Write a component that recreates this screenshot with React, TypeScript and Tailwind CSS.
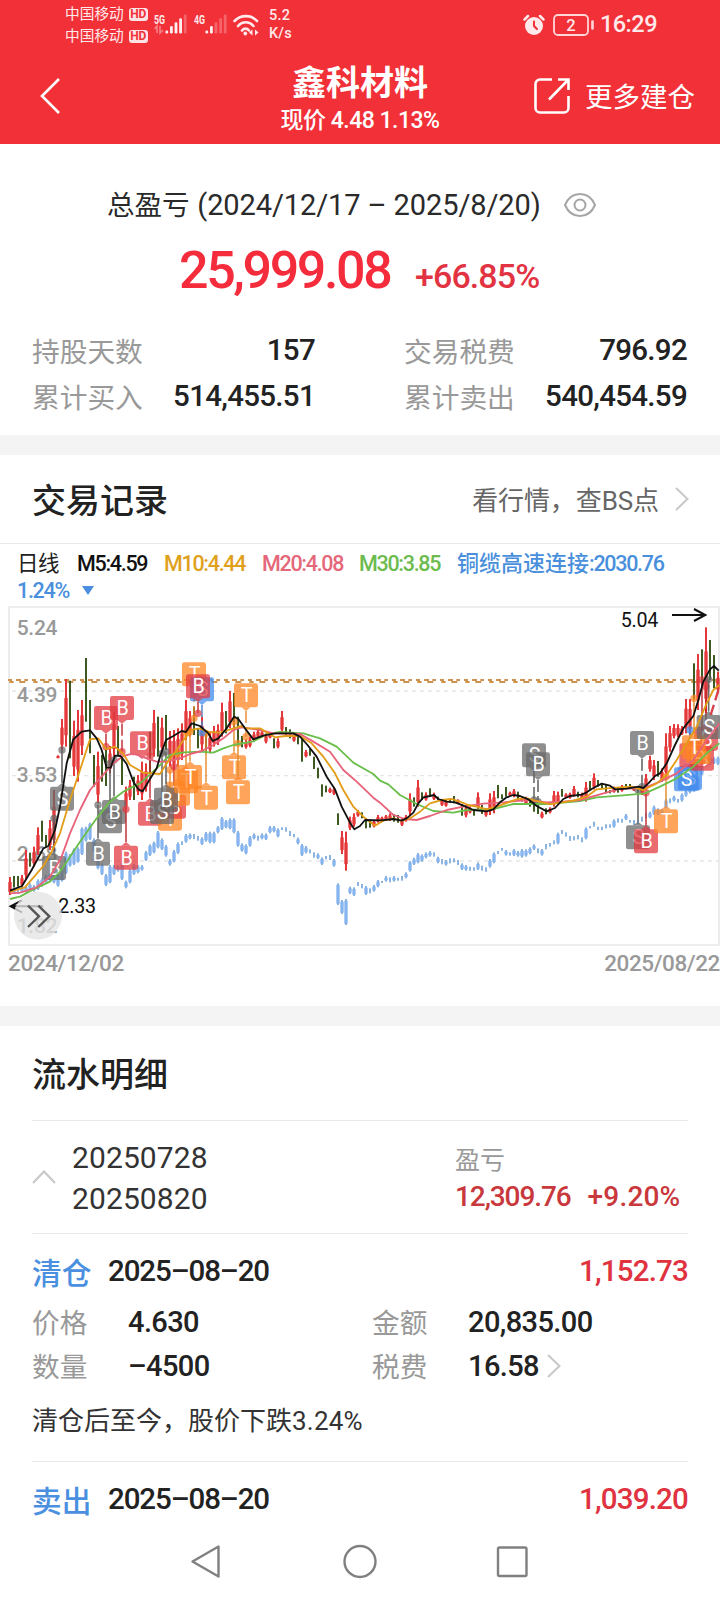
import React from "react";

// Chart units are a third of a pixel: 2160 x 1140 drawn at 720 x 380
const STEP = 12;
const FIRST_X = 30;

// [direction, high, low]
type Candle = ["r" | "g", number, number];

const candles: Candle[] = [
  ["r", 831, 885], ["g", 828, 862], ["g", 828, 860], ["r", 825, 860], ["r", 750, 840], ["g", 758, 800],
  ["r", 740, 800], ["r", 682, 765], ["g", 662, 725], ["g", 705, 740], ["r", 660, 750], ["r", 570, 750],
  ["r", 466, 475], ["r", 357, 450], ["r", 237, 440], ["g", 242, 475], ["r", 362, 528], ["r", 330, 545],
  ["r", 300, 465], ["g", 174, 365], ["g", 300, 460], ["g", 465, 560], ["r", 455, 610], ["g", 465, 545],
  ["g", 440, 558], ["r", 438, 520], ["r", 335, 470], ["g", 378, 465], ["g", 470, 555], ["r", 560, 630],
  ["r", 540, 600], ["g", 530, 600], ["r", 525, 585], ["r", 485, 600], ["r", 490, 575], ["g", 395, 520],
  ["r", 330, 470], ["g", 350, 470], ["r", 353, 460], ["g", 345, 450], ["r", 393, 500], ["r", 390, 510],
  ["r", 385, 500], ["r", 370, 480], ["r", 300, 420], ["r", 333, 410], ["g", 320, 405], ["g", 385, 445],
  ["r", 350, 450], ["g", 400, 460], ["r", 395, 460], ["r", 378, 440], ["r", 373, 435], ["r", 308, 410],
  ["g", 333, 400], ["r", 273, 385], ["g", 279, 390], ["g", 350, 430], ["g", 408, 442], ["r", 418, 446],
  ["r", 410, 442], ["r", 395, 425], ["r", 388, 415], ["r", 392, 412], ["r", 400, 430], ["r", 400, 415],
  ["g", 415, 445], ["r", 415, 445], ["r", 333, 400], ["g", 381, 405], ["g", 388, 415], ["r", 405, 425],
  ["g", 408, 433], ["g", 418, 485], ["r", 450, 472], ["g", 445, 467], ["g", 470, 507], ["g", 503, 535],
  ["g", 553, 590], ["g", 557, 577], ["r", 563, 579], ["r", 562, 585], ["g", 640, 675], ["r", 693, 762],
  ["r", 695, 812], ["r", 650, 690], ["r", 640, 680], ["r", 630, 650], ["g", 637, 655], ["g", 655, 685],
  ["g", 660, 683], ["r", 660, 682], ["r", 645, 668], ["r", 650, 663], ["r", 645, 660], ["r", 640, 663],
  ["g", 643, 665], ["g", 645, 668], ["r", 655, 678], ["r", 645, 665], ["r", 580, 645], ["g", 592, 620],
  ["r", 540, 620], ["g", 577, 600], ["r", 577, 602], ["g", 565, 590], ["r", 578, 600], ["g", 590, 600],
  ["r", 597, 618], ["r", 600, 620], ["g", 600, 608], ["g", 588, 610], ["r", 598, 612], ["g", 612, 647],
  ["r", 615, 652], ["r", 620, 640], ["g", 628, 647], ["r", 577, 630], ["g", 615, 642], ["r", 625, 650],
  ["r", 580, 645], ["r", 573, 640], ["g", 555, 595], ["g", 583, 597], ["g", 561, 590], ["r", 575, 588],
  ["r", 567, 592], ["g", 575, 598], ["r", 590, 605], ["r", 590, 615], ["g", 598, 620], ["g", 598, 635],
  ["g", 610, 642], ["r", 635, 655], ["g", 625, 643], ["r", 622, 640], ["r", 573, 620], ["r", 575, 612],
  ["g", 567, 590], ["r", 580, 594], ["r", 578, 596], ["r", 558, 590], ["g", 575, 592], ["r", 578, 600],
  ["r", 546, 605], ["g", 543, 570], ["r", 520, 568], ["g", 540, 560], ["g", 550, 565], ["g", 553, 580],
  ["g", 570, 580], ["r", 560, 578], ["g", 565, 578], ["r", 555, 575], ["g", 552, 562], ["g", 552, 562],
  ["r", 560, 573], ["g", 560, 575], ["r", 555, 585], ["r", 522, 570], ["r", 467, 515], ["r", 480, 540],
  ["g", 483, 530], ["r", 505, 545], ["r", 400, 540], ["r", 378, 455], ["r", 372, 415], ["r", 373, 412],
  ["r", 378, 405], ["r", 297, 400], ["r", 297, 405], ["g", 190, 300], ["r", 162, 330], ["g", 148, 260],
  ["r", 82, 340], ["g", 120, 240], ["g", 165, 265], ["r", 215, 280],
];

// Sector index shown behind the stock, [high, low]
const sector: [number, number][] = [
  [865, 880], [862, 880], [870, 882], [860, 878], [857, 880], [850, 870], [855, 875], [838, 870],
  [835, 860], [825, 850], [820, 845], [818, 850], [820, 860], [800, 845], [755, 822], [762, 800],
  [745, 795], [742, 788], [682, 765], [680, 725], [668, 720], [715, 755], [775, 808], [790, 825],
  [822, 858], [795, 850], [795, 825], [795, 815], [790, 840], [842, 865], [807, 850], [792, 825],
  [795, 820], [795, 812], [753, 783], [733, 768], [725, 760], [693, 745], [715, 750], [735, 770],
  [777, 797], [750, 787], [727, 762], [724, 735], [702, 728], [700, 718], [702, 717], [708, 722],
  [712, 735], [696, 725], [695, 730], [695, 730], [678, 700], [651, 690], [660, 685], [655, 688],
  [655, 700], [693, 740], [730, 755], [733, 763], [708, 740], [700, 718], [707, 722], [700, 718],
  [700, 720], [678, 700], [678, 697], [685, 712], [682, 690], [682, 695], [693, 708], [702, 712],
  [713, 733], [732, 768], [738, 760], [748, 760], [757, 773], [760, 777], [772, 795], [768, 778],
  [765, 780], [777, 800], [850, 915], [900, 942], [897, 975], [860, 882], [862, 888], [846, 858],
  [852, 865], [858, 885], [865, 880], [855, 875], [840, 862], [843, 849], [828, 845], [832, 847],
  [828, 845], [833, 842], [828, 842], [817, 835], [783, 815], [773, 795], [759, 790], [763, 785],
  [757, 775], [753, 770], [757, 770], [770, 790], [777, 793], [780, 797], [775, 790], [775, 787],
  [780, 795], [790, 810], [795, 812], [800, 812], [802, 812], [787, 810], [797, 812], [802, 815],
  [777, 803], [757, 790], [753, 762], [744, 752], [750, 767], [757, 767], [747, 768], [753, 770],
  [747, 773], [748, 770], [742, 763], [733, 750], [745, 760], [747, 767], [732, 748], [729, 740],
  [721, 733], [698, 733], [690, 702], [697, 710], [708, 723], [709, 721], [705, 718], [712, 727],
  [682, 718], [678, 685], [665, 680], [680, 690], [680, 690], [673, 685], [673, 683], [658, 683],
  [655, 668], [657, 668], [642, 660], [660, 668], [660, 675], [662, 672], [650, 665], [640, 655],
  [635, 655], [617, 645], [625, 645], [627, 645], [597, 625], [595, 610], [587, 605], [597, 608],
  [580, 605], [570, 590], [530, 580], [530, 575], [530, 572], [490, 525], [475, 500], [470, 495],
  [472, 492], [470, 495],
];

const averages = [
  {
    name: "M30",
    color: "#6abf4b",
    points:
      "30,897 60,890 100,868 150,845 180,815 240,725 290,655 330,605 370,575 420,550 470,505 510,465 550,457 600,455 640,458 670,445 700,435 760,424 800,403 840,396 910,400 960,415 1010,440 1060,488 1120,522 1140,542 1165,553 1200,585 1250,612 1300,633 1360,638 1400,630 1480,627 1540,612 1640,612 1740,603 1790,592 1870,586 1935,580 1980,560 2030,535 2080,500 2120,460 2158,430",
  },
  {
    name: "M20",
    color: "#e8637a",
    points:
      "30,880 60,878 110,862 150,830 185,770 210,700 240,630 270,570 300,535 340,490 370,468 400,460 440,475 470,485 500,485 540,475 570,462 605,453 640,435 670,415 700,390 725,382 780,390 820,400 900,402 940,425 990,455 1030,510 1070,545 1120,593 1140,608 1180,645 1215,657 1250,660 1290,648 1340,630 1390,620 1450,611 1510,607 1580,600 1640,607 1690,605 1740,600 1800,583 1860,566 1930,565 1980,545 2030,520 2080,480 2120,420 2158,370",
  },
  {
    name: "M10",
    color: "#e39c17",
    points:
      "30,875 75,862 100,833 130,798 155,755 180,700 210,600 240,510 270,418 295,415 318,447 345,440 370,462 390,495 430,518 480,522 500,490 530,450 565,400 580,388 600,385 625,396 660,398 700,385 725,378 740,385 780,385 825,412 855,408 900,408 935,430 970,470 1005,520 1030,570 1060,620 1090,650 1125,677 1150,662 1180,655 1205,663 1235,652 1260,635 1290,610 1325,600 1355,597 1380,605 1405,615 1430,620 1460,628 1490,620 1530,605 1550,598 1575,594 1615,604 1650,613 1680,608 1720,602 1760,590 1790,568 1845,563 1895,560 1930,570 1970,550 2000,525 2030,480 2060,430 2090,380 2120,310 2140,270 2158,255",
  },
  {
    name: "M5",
    color: "#111111",
    points:
      "30,872 66,858 95,810 130,745 145,738 165,690 180,620 200,490 220,418 245,395 270,391 290,415 305,450 320,503 332,503 345,467 362,468 380,492 400,545 415,568 428,574 445,545 470,505 480,470 498,420 520,408 545,393 558,396 575,370 600,378 625,400 638,423 655,415 680,385 702,350 715,357 735,385 760,418 790,407 825,400 880,400 900,410 920,432 950,470 980,530 1005,568 1025,620 1050,668 1063,688 1080,678 1095,660 1145,661 1180,657 1205,662 1220,655 1240,638 1255,610 1270,592 1290,588 1302,585 1315,597 1340,605 1365,607 1390,617 1420,630 1460,634 1480,628 1500,607 1520,592 1540,585 1560,588 1585,598 1610,618 1640,634 1665,624 1690,597 1710,588 1745,584 1760,577 1780,564 1805,551 1830,557 1845,568 1880,566 1915,560 1930,564 1945,550 1965,528 1980,520 2000,490 2025,435 2050,385 2080,348 2095,300 2110,245 2130,208 2142,198 2156,212",
  },
];

const tagColors = {
  gray: { fill: "#686868", stem: "#555555" },
  red: { fill: "#e2393f", stem: "#c0272d" },
  orange: { fill: "#ff8422", stem: "#e88a2c" },
  blue: { fill: "#3f8aee", stem: "#4a80c8" },
};

interface Tag {
  x: number;
  y: number;
  label: string;
  tone: keyof typeof tagColors;
  point: "up" | "down";
  // where the stem ends, left out when the tag has none
  to?: number;
}

const tags: Tag[] = [
  { x: 186, y: 560, label: "S", tone: "gray", point: "up", to: 450 },
  { x: 162, y: 768, label: "B", tone: "gray", point: "up", to: 655 },
  { x: 318, y: 318, label: "B", tone: "red", point: "down", to: 440 },
  { x: 366, y: 288, label: "B", tone: "red", point: "down", to: 455 },
  { x: 426, y: 394, label: "B", tone: "red", point: "down" },
  { x: 294, y: 725, label: "B", tone: "gray", point: "up", to: 615 },
  { x: 330, y: 628, label: "S", tone: "gray", point: "up", to: 490 },
  { x: 342, y: 600, label: "B", tone: "gray", point: "up", to: 480 },
  { x: 378, y: 737, label: "B", tone: "red", point: "up", to: 628 },
  { x: 450, y: 605, label: "B", tone: "red", point: "up", to: 470 },
  { x: 510, y: 620, label: "T", tone: "orange", point: "up", to: 510 },
  { x: 522, y: 584, label: "B", tone: "red", point: "up", to: 500 },
  { x: 486, y: 600, label: "S", tone: "gray", point: "up", to: 460 },
  { x: 534, y: 545, label: "T", tone: "orange", point: "up", to: 460 },
  { x: 498, y: 563, label: "B", tone: "gray", point: "up", to: 455 },
  { x: 558, y: 508, label: "T", tone: "orange", point: "up", to: 400 },
  { x: 570, y: 495, label: "T", tone: "orange", point: "up", to: 395 },
  { x: 618, y: 557, label: "T", tone: "orange", point: "up", to: 400 },
  { x: 582, y: 187, label: "T", tone: "orange", point: "down", to: 355 },
  { x: 606, y: 232, label: "S", tone: "blue", point: "down", to: 398 },
  { x: 594, y: 223, label: "B", tone: "red", point: "down", to: 340 },
  { x: 738, y: 250, label: "T", tone: "orange", point: "down", to: 410 },
  { x: 702, y: 466, label: "T", tone: "orange", point: "up", to: 365 },
  { x: 714, y: 541, label: "T", tone: "orange", point: "up", to: 430 },
  { x: 1602, y: 430, label: "S", tone: "gray", point: "down", to: 600 },
  { x: 1614, y: 457, label: "B", tone: "gray", point: "down", to: 605 },
  { x: 1926, y: 393, label: "B", tone: "gray", point: "down", to: 560 },
  { x: 1914, y: 676, label: "S", tone: "gray", point: "up", to: 570 },
  { x: 1938, y: 688, label: "B", tone: "red", point: "up", to: 578 },
  { x: 1998, y: 628, label: "T", tone: "orange", point: "up", to: 530 },
  { x: 2070, y: 498, label: "S", tone: "blue", point: "up", to: 390 },
  { x: 2058, y: 502, label: "S", tone: "blue", point: "up" },
  { x: 2106, y: 440, label: "B", tone: "red", point: "up", to: 240 },
  { x: 2074, y: 430, label: "T", tone: "red", point: "up" },
  { x: 2096, y: 420, label: "B", tone: "orange", point: "up" },
  { x: 2118, y: 380, label: "B", tone: "red", point: "up", to: 260 },
  { x: 2082, y: 406, label: "T", tone: "orange", point: "up", to: 295 },
  { x: 2126, y: 345, label: "S", tone: "gray", point: "up", to: 238 },
];

const TradeTag = ({ x, y, label, tone, point, to }: Tag) => {
  const { fill, stem } = tagColors[tone];
  const tip = point === "up" ? y - 11 : y + 83;
  const base = point === "up" ? y : y + 72;
  return (
    <g>
      {to !== undefined && (
        <>
          <line
            x1={x}
            x2={x}
            y1={tip}
            y2={to}
            stroke={stem}
            strokeWidth={5}
            strokeOpacity={0.85}
            strokeDasharray={point === "down" ? "36 12" : undefined}
          />
          <circle cx={x} cy={to} r={11} fill={fill} fillOpacity={0.7} />
        </>
      )}
      <g fill={fill} fillOpacity={0.74}>
        <rect x={x - 36} y={y} width={72} height={72} rx={7} />
        <path d={`M${x - 14} ${base}L${x} ${tip}L${x + 14} ${base}z`} />
      </g>
      <text x={x + 2} y={y + 57} textAnchor="middle" fontSize={59} fill="#fff">
        {label}
      </text>
    </g>
  );
};

const KLineChart = () => (
  <svg
    viewBox="0 0 2160 1140"
    className="block h-[380px] w-[720px] font-['Roboto','Noto_Sans_CJK_SC',sans-serif]"
  >
    {/* Frame and grid */}
    <path d="M27 1035V21H2157V1035z" fill="none" stroke="#e9e9e9" strokeWidth={5} />
    {[273, 527, 783].map((y) => (
      <line key={y} x1={36} x2={2156} y1={y} y2={y} stroke="#e6e6e6" strokeWidth={4} strokeDasharray="12 12" />
    ))}
    <line x1={24} x2={2158} y1={240} y2={240} stroke="#cf9350" strokeWidth={6} strokeDasharray="12 12 15 10 11 12" />
    <line x1={28} x2={2158} y1={246} y2={246} stroke="#cf9350" strokeWidth={6} strokeDasharray="13 17 18 24" />

    {/* Price axis */}
    <g fill="#999" fontSize={63} fontWeight={500} letterSpacing={-0.8}>
      <text x={50} y={104}>5.24</text>
      <text x={50} y={307}>4.39</text>
      <text x={50} y={545}>3.53</text>
      <text x={50} y={782}>2.68</text>
      <text x={50} y={1000}>1.82</text>
    </g>

    {sector.map(([high, low], i) => (
      <g key={i} fill="#86b4ef">
        <rect x={FIRST_X + i * STEP - 2.5} y={high} width={5} height={low - high} fill="#76a6d8" />
        {low - high > 16 && (
          <rect x={FIRST_X + i * STEP - 5} y={high + 5} width={10} height={low - high - 9} />
        )}
      </g>
    ))}

    {candles.map(([dir, high, low], i) => {
      const x = FIRST_X + i * STEP;
      const span = low - high;
      return dir === "r" ? (
        <g key={i} fill="#e5383b">
          <rect x={x - 3} y={high} width={6} height={span} />
          <rect x={x - 5} y={high + span * 0.28} width={10} height={span * 0.55} />
        </g>
      ) : (
        <rect key={i} x={x - 3} y={high} width={6} height={span} fill="#3c5a22" />
      );
    })}

    {tags.map((tag, i) => (
      <TradeTag key={i} {...tag} />
    ))}

    {averages.map((line) => (
      <polyline
        key={line.name}
        points={line.points}
        fill="none"
        stroke={line.color}
        strokeWidth={5.5}
        strokeLinejoin="round"
      />
    ))}
    <path d="M2132 345L2156 268" stroke="#d8404a" strokeWidth={7} strokeDasharray="32 14" />

    {/* Highest and lowest price */}
    <g fill="none" stroke="#111" strokeWidth={6}>
      <path d="M2016 45H2116M2082 27L2116 45L2082 63" />
      <path d="M130 919H32M66 901L32 919L66 937" />
    </g>
    <g fontSize={59} fill="#111" letterSpacing={-0.6}>
      <text x={1862} y={80}>5.04</text>
      <text x={175} y={938}>2.33</text>
    </g>

    {/* Expand button */}
    <circle cx={114} cy={947} r={72} fill="#e4e4e4" fillOpacity={0.78} />
    <path d="M84 917L117 949L84 981M115 917L148 949L115 981" fill="none" stroke="#555" strokeWidth={7} />
  </svg>
);

const HdBadge = () => (
  <span className="flex h-[13px] w-[19px] items-center justify-center rounded-[3px] bg-[#ffe3e4] text-[12px] font-bold leading-none text-[#f23038]">
    HD
  </span>
);

const Signal = ({ label, lit, data }: { label: string; lit: number; data?: boolean }) => (
  <svg viewBox="0 0 34 24" className="h-6 w-[34px] overflow-visible">
    <text x={0} y={10.5} fontSize={12.5} fontWeight={700} fill="#ffe9ea" textLength={11} lengthAdjust="spacingAndGlyphs">
      {label}
    </text>
    {[0, 1, 2, 3, 4].map((n) => (
      <rect
        key={n}
        x={11.4 + n * 4.6}
        y={n === 0 ? 17.5 : 17 - n * 3.9}
        width={2.8}
        height={n === 0 ? 3 : 3.9 * n + 3.5}
        rx={1.2}
        fill="#fff"
        fillOpacity={n < lit ? 0.92 : 0.25}
      />
    ))}
    {data && <path d="M3 20V13L.5 16M6 13V20L9 17" fill="none" stroke="#fff" strokeOpacity={0.4} strokeWidth={1.6} />}
  </svg>
);

const StatusBar = () => (
  <div className="flex h-[50px] items-center pl-[65px] text-[#ffe9ea]">
    <div className="flex w-[89px] flex-col">
      {["sim1", "sim2"].map((sim) => (
        <div key={sim} className="flex h-[22px] items-center gap-[5px]">
          <span className="text-[14.7px] leading-none">中国移动</span>
          <HdBadge />
        </div>
      ))}
    </div>
    <Signal label="5G" lit={4} data />
    <span className="w-1.5" />
    <Signal label="4G" lit={2} />
    <svg viewBox="0 0 26 22" className="ml-[5px] h-[22px] w-[26px]" fill="none" stroke="#ffe9ea" strokeWidth={2.6} strokeLinecap="round">
      <path d="M1.5 7C8 .5 18 .5 24 7M5 12C9.5 7 16 7 20.5 12M9 16.5C11 14 14 14 16 16.5" />
      <circle cx={12.3} cy={19.5} r={1.9} fill="#ffe9ea" stroke="none" />
      <path d="M16 18.5L19.5 15.5V21.5zM25.5 18.5L22 15.5V21.5z" fill="#ffe9ea" stroke="none" />
    </svg>
    <div className="ml-2.5 flex flex-col pb-px text-[14.5px] font-medium leading-[18px] tracking-[0.2px]">
      <span>5.2</span>
      <span>K/s</span>
    </div>
    <svg viewBox="0 0 22 22" className="ml-[231px] h-[22px] w-[22px]" fill="none" stroke="#ffe9ea" strokeWidth={2.5} strokeLinecap="round">
      <circle cx={11} cy={12} r={9} fill="#ffe9ea" stroke="none" />
      <path d="M1.5 5.5L5 2M20.5 5.5L17 2" />
      <path d="M11 7.5V12L14 15" stroke="#f23038" strokeWidth={2} />
    </svg>
    <svg viewBox="0 0 42 22" className="ml-2 h-[22px] w-[42px]">
      <rect x={1} y={1} width={34} height={20} rx={4} fill="none" stroke="#ffd5d7" strokeWidth={1.8} />
      <path d="M39.5 7.5V14.5" stroke="#ffd5d7" strokeWidth={2.6} strokeLinecap="round" />
      <text x={18} y={17} textAnchor="middle" fontSize={16.5} fontWeight={500} fill="#ffe9ea">2</text>
    </svg>
    <span className="ml-[5px] text-[23.5px] font-medium leading-none tracking-[-0.5px]">16:29</span>
  </div>
);

const Header = () => (
  <header className="h-36 shrink-0 bg-[#f23038] text-white">
    <StatusBar />
    <div className="relative flex h-[94px] justify-center">
      <svg viewBox="0 0 20 36" className="absolute left-10 top-7 h-9 w-5" fill="none" stroke="#fff" strokeWidth={2.6}>
        <path d="M19 1L2 18L19 35" />
      </svg>
      <div className="flex flex-col items-center pt-3.5">
        <h1 className="text-[34px] font-bold leading-[38px]">鑫科材料</h1>
        <p className="mt-[7px] text-[23px] font-medium leading-6 tracking-[-0.5px]">现价 4.48 1.13%</p>
      </div>
      <div className="absolute right-[25px] top-7 flex h-9 items-center gap-[15px]">
        <svg viewBox="0 0 36 36" className="h-9 w-9" fill="none" stroke="#fff" strokeWidth={2.6}>
          <path d="M18 1.5H6A4.5 4.5 0 0 0 1.5 6V30A4.5 4.5 0 0 0 6 34.5H30A4.5 4.5 0 0 0 34.5 30V18" />
          <path d="M15 21.5L34 2M24 1.5H34.5V12" />
        </svg>
        <span className="pt-1 text-[27.5px] leading-none">更多建仓</span>
      </div>
    </div>
  </header>
);

const SummaryRow = ({ label, value }: { label: string; value: string }) => (
  <div className="flex h-[46px] items-center justify-between">
    <span className="pt-1 text-[27.7px] leading-none text-[#999]">{label}</span>
    <span className="text-[29.5px] font-medium leading-none tracking-[-0.7px] text-[#222]">{value}</span>
  </div>
);

const Summary = () => (
  <section className="h-[291px] shrink-0 px-8 pt-[41px]">
    <div className="flex h-10 items-center pl-[75px] text-[27.5px] text-[#2a2a2a]">
      <span className="whitespace-pre pt-0.5 leading-none">总盈亏 </span>
      <span className="ml-px text-[29px] leading-none tracking-[-0.1px]">(2024/12/17 – 2025/8/20)</span>
      <svg viewBox="0 0 32 24" className="ml-[23px] h-6 w-8" fill="none" stroke="#a5a5a5" strokeWidth={2}>
        <path d="M1 12C4 5 9.5 1 16 1S28 5 31 12C28 19 22.5 23 16 23S4 19 1 12z" />
        <circle cx={16} cy={12} r={5.5} />
      </svg>
    </div>
    <div className="mt-[9px] flex h-[74px] items-baseline pl-[147px] text-[#f52c3c]">
      <span className="w-[236px] text-[52px] font-medium leading-[74px] tracking-[-2.4px]">25,999.08</span>
      <span className="text-[34px] font-medium tracking-[-0.9px] text-[#e23342]">+66.85%</span>
    </div>
    <div className="mt-5 grid grid-cols-[283px_283px] gap-x-[89px]">
      <SummaryRow label="持股天数" value="157" />
      <SummaryRow label="交易税费" value="796.92" />
      <SummaryRow label="累计买入" value="514,455.51" />
      <SummaryRow label="累计卖出" value="540,454.59" />
    </div>
  </section>
);

const Chevron = () => (
  <svg viewBox="0 0 14 24" className="h-6 w-3.5" fill="none" stroke="#c8c8c8" strokeWidth={2}>
    <path d="M1 1L12.5 12L1 23" />
  </svg>
);

const TradeRecords = () => (
  <section className="h-[551px] shrink-0">
    <div className="flex h-[89px] items-center justify-between border-b border-[#e9e9e9] pl-8 pr-[31px]">
      <h2 className="pt-1 text-[34px] font-medium leading-none text-[#222]">交易记录</h2>
      <div className="flex items-center gap-4">
        <span className="pt-1 text-[26px] leading-none tracking-[-0.1px] text-[#666]">看行情，查BS点</span>
        <Chevron />
      </div>
    </div>
    <div className="h-14 whitespace-nowrap pl-[17px] pt-1.5 text-[21.5px] font-medium leading-[27px] tracking-[-1.3px]">
      <div className="flex h-[27px]">
        <span className="w-[60px] font-normal tracking-[-0.5px] text-[#222]">日线</span>
        <span className="w-[87px] text-[#111]">M5:4.59</span>
        <span className="w-[98px] text-[#dfa11c]">M10:4.44</span>
        <span className="w-[97px] text-[#e4677a]">M20:4.08</span>
        <span className="w-[98px] text-[#6cbb4e]">M30:3.85</span>
        <span className="text-[#4a8fdc]">
          <span className="text-[22px] tracking-normal">铜缆高速连接</span>:2030.76
        </span>
      </div>
      <div className="flex h-[27px] items-center text-[#4a8fdc]">
        <span className="w-[65px]">1.24%</span>
        <svg viewBox="0 0 12 9" className="h-[9px] w-3" fill="#4a8fe0">
          <path d="M0 0H12L6 9z" />
        </svg>
      </div>
    </div>
    <div className="h-[345px]">
      <KLineChart />
    </div>
    <div className="relative flex h-9 items-center justify-between pl-2 text-[22.5px] font-medium leading-none tracking-[-0.4px] text-[#999]">
      <span>2024/12/02</span>
      <span>2025/08/22</span>
    </div>
  </section>
);

const OrderTitle = ({ side, date, amount }: { side: string; date: string; amount: string }) => (
  <div className="flex h-12 items-center">
    <span className="w-[76px] pt-1 text-[29.7px] font-medium leading-none text-[#4a8fe0]">{side}</span>
    <span className="flex-1 text-[29.5px] font-medium leading-none tracking-[-1.1px] text-[#222]">{date}</span>
    <span className="text-[29.5px] font-medium leading-none tracking-[-0.8px] text-[#e0323f]">{amount}</span>
  </div>
);

const Field = ({ label, value, more }: { label: string; value: string; more?: boolean }) => (
  <div className="flex h-11 items-center">
    <span className="w-24 pt-1 text-[27.7px] leading-none text-[#999]">{label}</span>
    <span className="mr-2 text-[29px] font-medium leading-none tracking-[-0.6px] text-[#222]">{value}</span>
    {more && <Chevron />}
  </div>
);

const Details = () => (
  <section className="shrink-0 px-8">
    <h2 className="flex h-[94px] items-center pt-1 text-[34px] font-medium leading-none text-[#222]">流水明细</h2>

    <div className="flex h-[113px] items-center border-t border-[#e9e9e9] text-[#333]">
      <svg viewBox="0 0 24 14" className="h-3.5 w-6" fill="none" stroke="#c8c8c8" strokeWidth={2.2}>
        <path d="M1 13L12 1.5L23 13" />
      </svg>
      <div className="ml-4 w-[383px] pt-0.5 text-[30px] leading-[41px] tracking-[0.1px]">
        <p>20250728</p>
        <p>20250820</p>
      </div>
      <div className="flex flex-col pt-1">
        <span className="text-[25px] leading-9 text-[#999]">盈亏</span>
        <span className="flex gap-[17px] text-[28px] font-medium leading-9 tracking-[-1.1px] text-[#c9383c]">
          <span>12,309.76</span>
          <span className="tracking-[0.2px]">+9.20%</span>
        </span>
      </div>
    </div>

    <div className="h-[228px] border-t border-[#e9e9e9] pt-3.5">
      <OrderTitle side="清仓" date="2025–08–20" amount="1,152.73" />
      <div className="mt-1 grid grid-cols-[340px_1fr]">
        <Field label="价格" value="4.630" />
        <Field label="金额" value="20,835.00" />
        <Field label="数量" value="–4500" />
        <Field label="税费" value="16.58" more />
      </div>
      <p className="mt-4 text-[26px] leading-[34px] text-[#333]">
        清仓后至今，股价下跌<span className="tracking-[0.2px]">3.24%</span>
      </p>
    </div>

    <div className="border-t border-[#e9e9e9] pt-3.5">
      <OrderTitle side="卖出" date="2025–08–20" amount="1,039.20" />
    </div>
  </section>
);

const NavBar = () => (
  <nav className="mt-auto flex h-[75px] shrink-0 items-center justify-center pb-1">
    <svg viewBox="0 0 360 40" className="h-10 w-[360px]" fill="none" stroke="#808080" strokeWidth={2.4} strokeLinejoin="round">
      <path d="M38.5 5.5V35.5L12.5 20.5z" />
      <circle cx={180} cy={20.5} r={15.5} />
      <rect x={318} y={6.5} width={28.5} height={28.5} rx={1.5} />
    </svg>
  </nav>
);

const App = () => (
  <div className="flex h-[1600px] w-[720px] flex-col overflow-hidden bg-white font-['Roboto','Noto_Sans_CJK_SC',sans-serif]">
    <Header />
    <Summary />
    <div className="h-5 shrink-0 bg-[#f4f4f4]" />
    <TradeRecords />
    <div className="h-5 shrink-0 bg-[#f4f4f4]" />
    <Details />
    <NavBar />
  </div>
);

export default App;
